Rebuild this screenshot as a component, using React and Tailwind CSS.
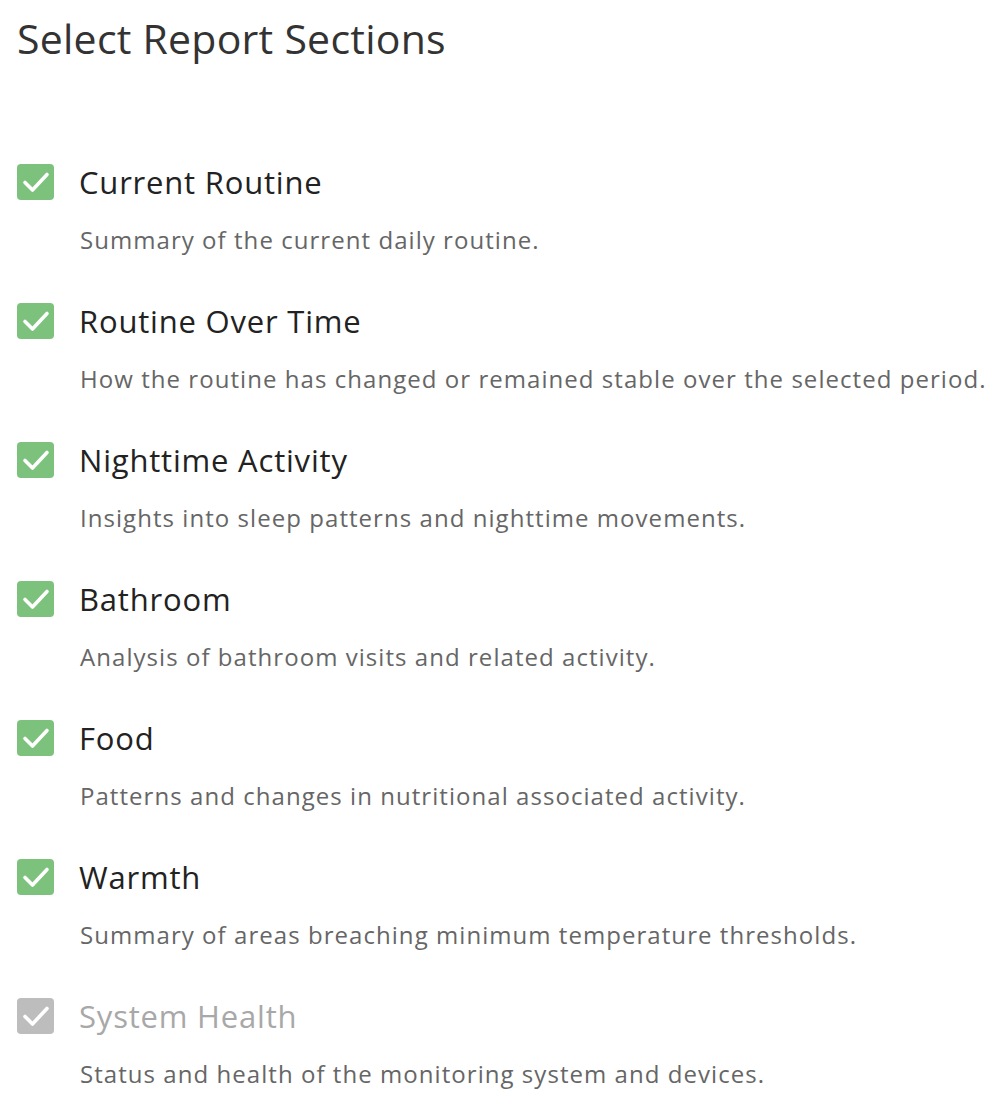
import React, { useState } from 'react';

const sections = [
    { title: 'Current Routine', desc: 'Summary of the current daily routine.' },
    { title: 'Routine Over Time', desc: 'How the routine has changed or remained stable over the selected period.' },
    { title: 'Nighttime Activity', desc: 'Insights into sleep patterns and nighttime movements.' },
    { title: 'Bathroom', desc: 'Analysis of bathroom visits and related activity.' },
    { title: 'Food', desc: 'Patterns and changes in nutritional associated activity.' },
    { title: 'Warmth', desc: 'Summary of areas breaching minimum temperature thresholds.' },
    { title: 'System Health', desc: 'Status and health of the monitoring system and devices.', disabled: true },
];

const Check = ({ disabled }) => (
    <span
        className={`flex items-center justify-center w-[37px] h-[36px] rounded-[4px] shrink-0
      ${disabled ? 'bg-[#bdbdbd]' : 'bg-[#7cc17c]'}`}
    >
        <svg width="28" height="22" viewBox="0 0 28 22" fill="none">
            <path d="M3 11.5 L10.5 19 L25 3.5" stroke="white" strokeWidth="3.6" strokeLinecap="round" strokeLinejoin="round" />
        </svg>
    </span>
);

const App = () => {
    const [checked] = useState(sections.map(() => true));

    return (
        <div className="bg-white min-h-[1108px] pl-[17px] pt-[10px] font-['Open_Sans',sans-serif]">
            <h1 className="text-[41px] leading-[56px] tracking-[0.25px] text-[#333]">Select Report Sections</h1>
            <div className="mt-[98px] flex flex-col gap-[48px]">
                {sections.map((s, i) => (
                    <div key={s.title} className="flex flex-col gap-[25px]">
                        <div className="flex items-center gap-[25px]">
                            <Check disabled={s.disabled || !checked[i]} />
                            <span className={`text-[31px] leading-[36px] tracking-[0.8px] ${s.disabled ? 'text-[#a8a8a8]' : 'text-[#222]'}`}>
                                {s.title}
                            </span>
                        </div>
                        <p className="ml-[63px] text-[24px] leading-[30px] tracking-[1.05px] text-[#666]">{s.desc}</p>
                    </div>
                ))}
            </div>
        </div>
    );
};

export default App;
